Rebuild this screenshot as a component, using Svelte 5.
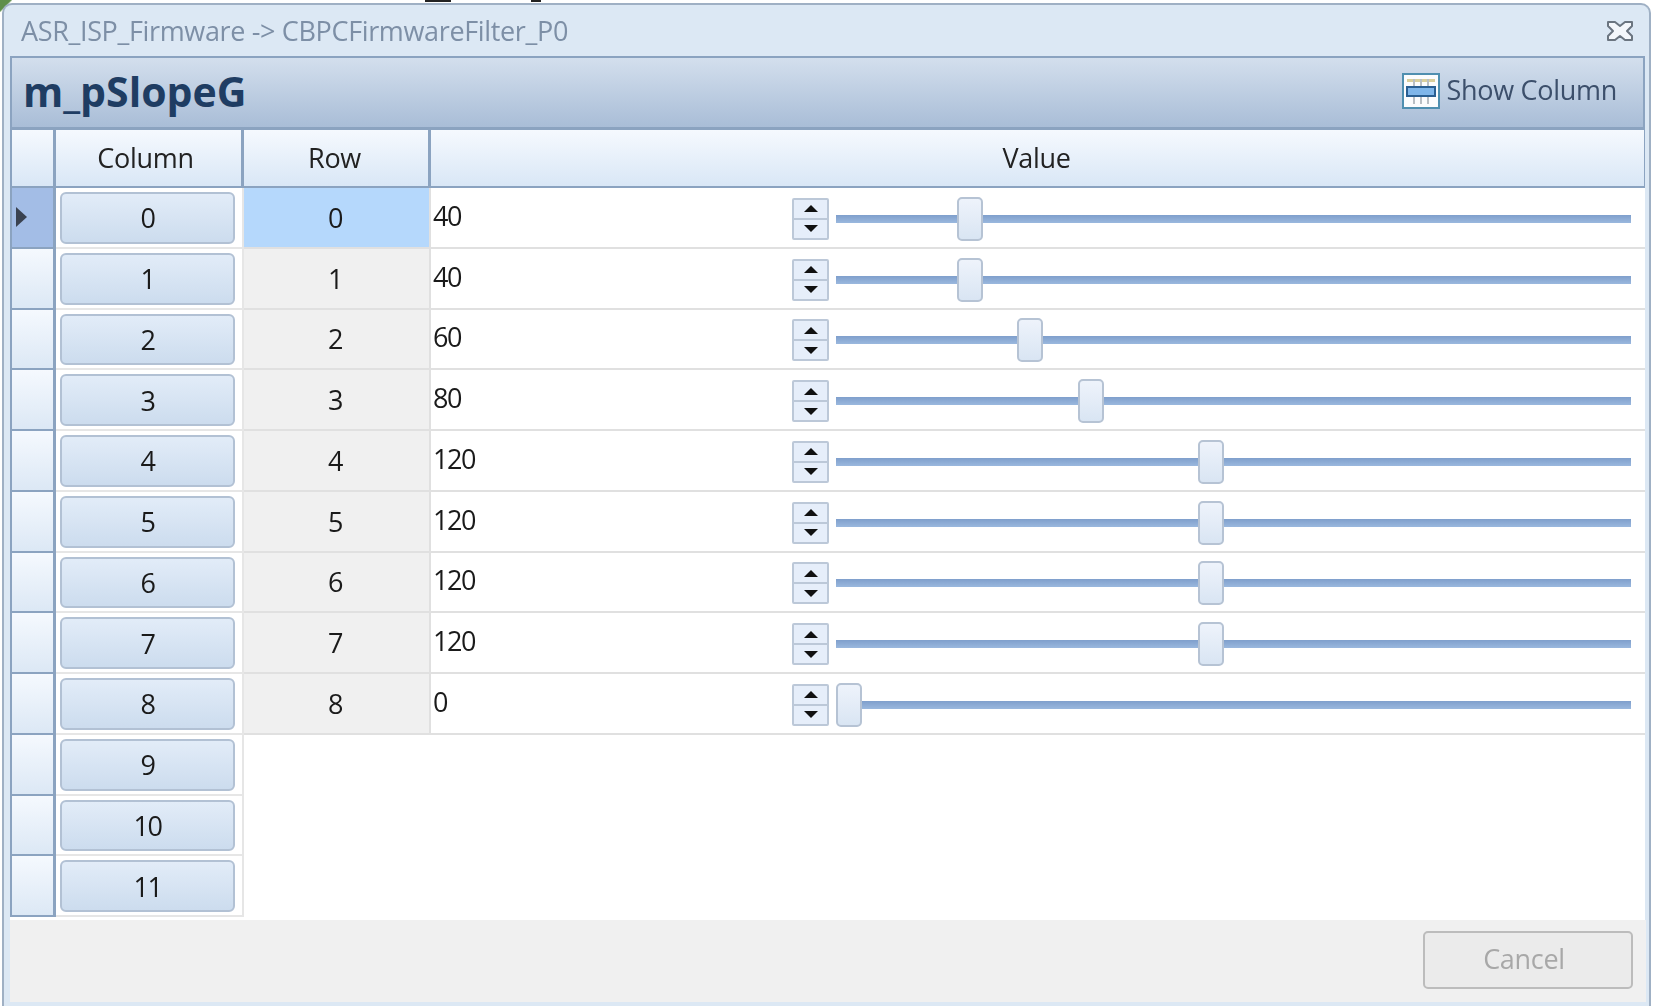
<script>
  const rows = [40, 40, 60, 80, 120, 120, 120, 120, 0];
  const extra = [9, 10, 11];
  const max = 255;

  // thumb centre runs over 770px of the track
  const thumbLeft = (v) => (v / max) * 770;
</script>

<span class="behind green"></span>
<span class="behind mark-a"></span>
<span class="behind mark-b"></span>

<div class="window">
  <div class="titlebar">
    <span class="caption">ASR_ISP_Firmware -&gt; CBPCFirmwareFilter_P0</span>
    <svg class="close" width="28" height="24" viewBox="0 0 28 24">
      <path d="M2 3h7l5 4 5-4h7v4l-5 5 5 5v4h-7l-5-4-5 4H2v-4l5-5-5-5z" fill="#f4f7fb" stroke="#6b7580" stroke-width="2" stroke-linejoin="round"/>
    </svg>
  </div>

  <div class="panel">
    <h1>m_pSlopeG</h1>
    <div class="show-col">
      <svg width="38" height="36" viewBox="0 0 38 36">
        <rect x="1" y="1" width="36" height="34" fill="#fbfcfd" stroke="#4f8fb0" stroke-width="2"/>
        <rect x="5" y="6" width="28" height="3" fill="#d9cf9c"/>
        <path d="M12 6v25M19 6v25M26 6v25" stroke="#b9bfc4" stroke-width="2"/>
        <rect x="5" y="14" width="28" height="9" fill="#7fb6ea" stroke="#2a5f92" stroke-width="2"/>
      </svg>
      <span>Show Column</span>
    </div>
  </div>

  <div class="grid">
    <div class="head corner"></div>
    <div class="head col-head">Column</div>
    <div class="head row-head">Row</div>
    <div class="head value-head">Value</div>

    {#each rows as v, i}
      <div class="rowhead" class:current={i === 0}>
        {#if i === 0}<span class="arrow"></span>{/if}
      </div>
      <div class="colcell"><button>{i}</button></div>
      <div class="rowcell" class:selected={i === 0}>{i}</div>
      <div class="valcell">
        <span class="val">{v}</span>
        <div class="spinner">
          <div class="spin"><i class="up"></i></div>
          <div class="spin"><i class="down"></i></div>
        </div>
        <div class="slider">
          <div class="track"></div>
          <div class="thumb" style="left: {thumbLeft(v)}px"></div>
        </div>
      </div>
    {/each}

    {#each extra as n}
      <div class="rowhead"></div>
      <div class="colcell"><button>{n}</button></div>
      <div class="blank"></div>
    {/each}
  </div>

  <div class="footer">
    <button class="cancel" disabled>Cancel</button>
  </div>
</div>

<style>
  :global(body) {
    margin: 0;
    background: #fff;
    overflow: hidden;
  }

  /* bits of whatever sits behind the dialog */
  .behind {
    position: absolute;
    top: 0;
  }

  .green {
    left: 0;
    width: 12px;
    height: 12px;
    background: linear-gradient(135deg, #5f8f4a 45%, #fff 55%);
  }

  .mark-a {
    left: 425px;
    width: 26px;
    height: 2px;
    background: #222;
  }

  .mark-b {
    left: 531px;
    width: 10px;
    height: 2px;
    background: #222;
  }

  .window {
    position: relative;
    width: 1649px;
    height: 1003px;
    margin: 3px 0 0 2px;
    box-sizing: border-box;
    display: flex;
    flex-direction: column;
    background: #dce8f4;
    border: 2px solid #9fb0c4;
    border-bottom: none;
    border-radius: 10px 10px 0 0;
    padding: 0 4px 4px 6px;
    overflow: hidden;
    font-family: "Open Sans", sans-serif;
    filter: blur(0.7px);
  }

  .titlebar {
    height: 51px;
    flex: none;
    display: flex;
    align-items: center;
    justify-content: space-between;
    padding: 0 11px 0 11px;
  }

  .caption {
    font-size: 27px;
    color: #7d8fa6;
    letter-spacing: -0.35px;
  }

  .panel {
    height: 74px;
    flex: none;
    box-sizing: border-box;
    display: flex;
    align-items: center;
    justify-content: space-between;
    padding: 0 26px 4px 11px;
    background: linear-gradient(#d3dfed, #a9bdd7);
    border: 2px solid #8ba3c0;
    border-bottom-width: 3px;
  }

  h1 {
    margin: 0;
    font-size: 41px;
    font-weight: 700;
    color: #1f3d63;
  }

  .show-col {
    display: flex;
    align-items: center;
    gap: 7px;
    font-size: 27px;
    letter-spacing: -0.3px;
    color: #3c4f6b;
  }

  .show-col span {
    margin-top: -2px;
  }

  .grid {
    flex: 1;
    display: grid;
    grid-template-columns: 46px 188px 187px 1fr;
    grid-template-rows: 58px;
    grid-auto-rows: 60.75px;
    background: #fff;
    color: #1a1a1a;
    font-size: 27px;
    letter-spacing: -1.4px;
  }

  .head {
    display: flex;
    align-items: center;
    justify-content: center;
    box-sizing: border-box;
    padding-bottom: 2px;
    background: linear-gradient(#f5f9fe, #d9e7f6);
    border-right: 3px solid #8ba3c0;
    border-bottom: 2px solid #8ba3c0;
    color: #222;
    letter-spacing: -0.3px;
  }

  .corner {
    border-left: 2px solid #8ba3c0;
  }

  .col-head {
    padding-right: 6px;
  }

  .row-head {
    padding-right: 3px;
  }

  .value-head {
    padding-right: 2px;
    border-right: 1px solid #8ba3c0;
  }

  .rowhead {
    box-sizing: border-box;
    position: relative;
    background: linear-gradient(#f5f9fe, #dce8f5);
    border: 2px solid #8ba3c0;
    border-top: none;
    border-right-width: 3px;
  }

  .rowhead.current {
    background: #a3bde6;
  }

  .arrow {
    position: absolute;
    left: 4px;
    top: 19px;
    border-left: 11px solid #3a4250;
    border-top: 10px solid transparent;
    border-bottom: 10px solid transparent;
  }

  .colcell {
    box-sizing: border-box;
    padding: 4px 7px 3px 4px;
    border-bottom: 2px solid #e6e6e6;
    border-right: 2px solid #e6e6e6;
  }

  .colcell button {
    width: 100%;
    height: 100%;
    padding: 0;
    font: inherit;
    letter-spacing: inherit;
    color: inherit;
    background: linear-gradient(#e2ecf8, #ccdcee);
    border: 2px solid #b2c1d4;
    border-radius: 6px;
  }

  .rowcell {
    display: flex;
    align-items: center;
    justify-content: center;
    box-sizing: border-box;
    padding-right: 3px;
    background: #f0f0f0;
    border-bottom: 2px solid #e0e0e0;
    border-right: 2px solid #e0e0e0;
  }

  .rowcell.selected {
    background: #b5d8fc;
  }

  .valcell {
    position: relative;
    display: flex;
    align-items: center;
    box-sizing: border-box;
    padding: 3px 0 0 2px;
    border-bottom: 2px solid #e0e0e0;
  }

  .val {
    width: 359px;
    flex: none;
    margin-top: -7px;
  }

  .spinner {
    width: 37px;
    height: 42px;
    flex: none;
    box-sizing: border-box;
    display: flex;
    flex-direction: column;
    border: 2px solid #bcc8d8;
    background: #bcc8d8;
    gap: 2px;
    border-radius: 2px;
  }

  .spin {
    flex: 1;
    display: flex;
    align-items: center;
    justify-content: center;
    background: #e6eefa;
  }

  .spin i {
    width: 0;
    height: 0;
    border-left: 7px solid transparent;
    border-right: 7px solid transparent;
  }

  .up {
    border-bottom: 7px solid #111;
  }

  .down {
    border-top: 7px solid #111;
  }

  .slider {
    position: relative;
    flex: none;
    width: 795px;
    height: 44px;
    margin-left: 7px;
    display: flex;
    align-items: center;
  }

  .track {
    width: 100%;
    height: 8px;
    background: linear-gradient(#7f9fcc, #9ab8de);
  }

  .thumb {
    position: absolute;
    top: 0;
    width: 26px;
    height: 44px;
    box-sizing: border-box;
    background: linear-gradient(#eef3fb, #d9e5f3);
    border: 2px solid #b6c3d4;
    border-radius: 5px;
  }

  .blank {
    grid-column: 3 / 5;
  }

  .footer {
    height: 82px;
    flex: none;
    box-sizing: border-box;
    margin-right: -1px;
    background: #f0f0f0;
    display: flex;
    justify-content: flex-end;
    align-items: flex-start;
    padding: 11px 13px 0 0;
  }

  .cancel {
    width: 210px;
    height: 58px;
    padding: 0 8px 4px 0;
    font: inherit;
    font-size: 27px;
    letter-spacing: -0.3px;
    color: #a8a8a8;
    background: #ebebeb;
    border: 2px solid #bcbcbc;
    border-radius: 5px;
  }
</style>
